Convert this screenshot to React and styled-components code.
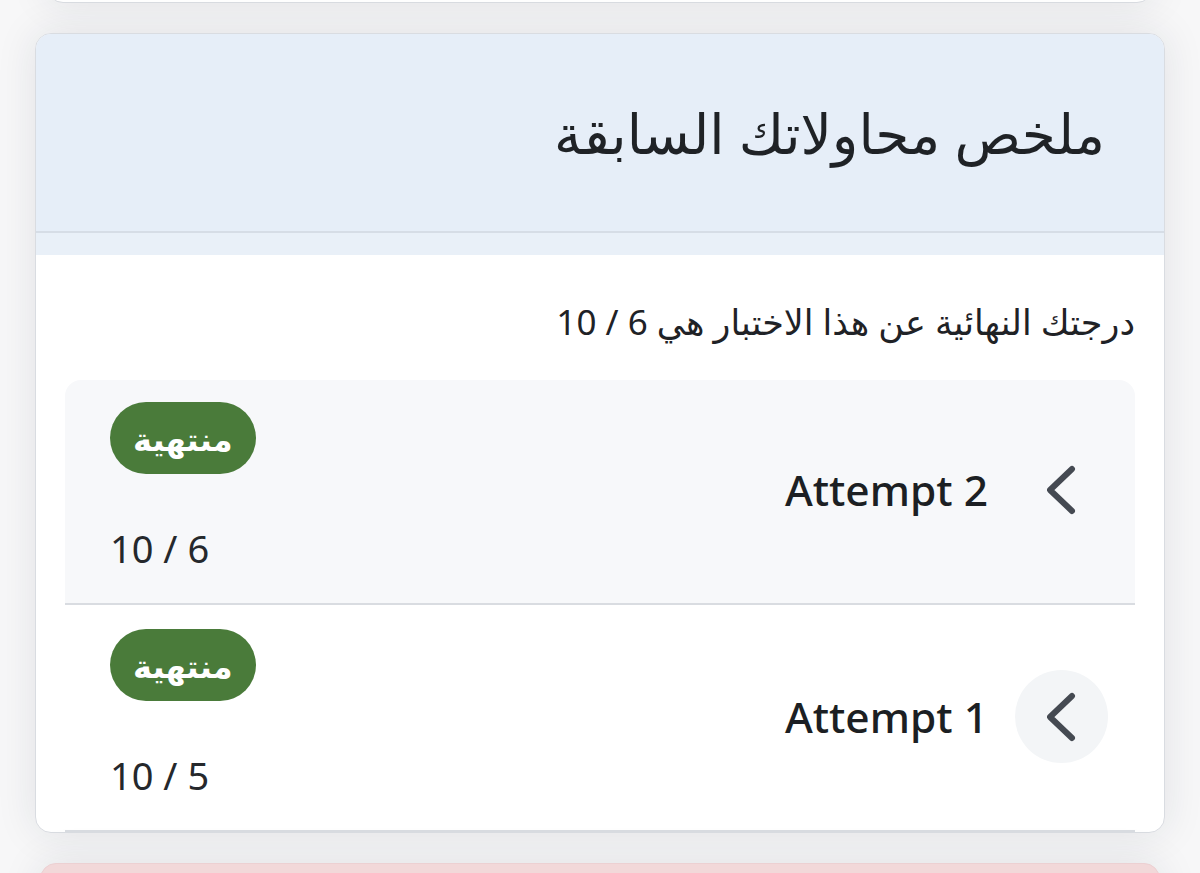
import React from "react";
import styled, { createGlobalStyle } from "styled-components";

const Global = createGlobalStyle`
  html, body { margin: 0; padding: 0; }
  body {
    background: #f7f7f8;
    font-family: "Noto Sans", "DejaVu Sans", sans-serif;
    color: #1f2226;
    overflow: hidden;
  }
`;

const Page = styled.div`
  display: flex;
  flex-direction: column;
  gap: 30px;
  height: 873px;
  overflow: hidden;
  direction: rtl;
`;

const Card = styled.div`
  margin: 0 ${(p) => p.$inset}px;
  background: ${(p) => p.$bg || "#ffffff"};
  border: 1px solid ${(p) => p.$border || "#d9dce1"};
  border-radius: 16px;
  box-shadow: 0 0 40px rgba(30, 40, 60, 0.1);
  overflow: hidden;
  flex-shrink: 0;
`;

const TopCard = styled(Card)`
  height: 60px;
  margin-top: -59px;
`;

const BottomCard = styled(Card)`
  height: 80px;
`;

const Header = styled.div`
  height: 197px;
  background: #e6eef8;
  border-bottom: 2px solid #d6dde6;
  display: flex;
  align-items: center;
  padding: 0 59px;
`;

const Title = styled.h2`
  margin: 0;
  font-size: 55px;
  font-weight: 400;
  color: #1f2226;
`;

const Strip = styled.div`
  height: 22px;
  background: #e9f0f8;
`;

const Body = styled.div`
  padding: 38px 29px 0 29px;
  display: flex;
  flex-direction: column;
`;

const Summary = styled.p`
  margin: 0 0 29px;
  font-size: 35px;
  line-height: 58px;
  color: #1f2226;
`;

const List = styled.div`
  display: flex;
  flex-direction: column;
`;

const Item = styled.div`
  display: flex;
  justify-content: space-between;
  align-items: center;
  padding: ${(p) => (p.$first ? "22px" : "24px")} 27px 26px 45px;
  background: ${(p) => (p.$active ? "#f7f8fa" : "#ffffff")};
  border-bottom: 2px solid #d9dce1;
  border-radius: ${(p) => (p.$first ? "16px 16px 0 0" : "0")};
`;

const Lead = styled.div`
  display: flex;
  align-items: center;
  gap: 27px;
`;

const ChevronButton = styled.div`
  width: 93px;
  height: 93px;
  border-radius: 50%;
  background: ${(p) => (p.$hover ? "#f3f5f7" : "transparent")};
  display: flex;
  align-items: center;
  justify-content: center;
`;

const AttemptName = styled.span`
  font-size: 42.5px;
  font-weight: 500;
  color: #1c1f23;
  direction: ltr;
`;

const Side = styled.div`
  display: flex;
  flex-direction: column;
  align-items: flex-end;
  gap: 46px;
`;

const Badge = styled.span`
  display: inline-flex;
  align-items: center;
  justify-content: center;
  height: 72px;
  padding: 0 23px;
  border-radius: 36px;
  background: #4a7b3a;
  color: #ffffff;
  font-size: 32px;
  font-weight: 700;
`;

const Score = styled.span`
  font-size: 38px;
  line-height: 57px;
  color: #25282c;
`;

const Chevron = () => (
  <svg width="30" height="50" viewBox="0 0 30 50" aria-hidden="true">
    <polyline
      points="25,4 3,25 25,46"
      fill="none"
      stroke="#454a52"
      strokeWidth="6"
      strokeLinecap="round"
      strokeLinejoin="round"
    />
  </svg>
);

const attempts = [
  { name: "Attempt 2", score: "6 / 10", active: true, hover: false },
  { name: "Attempt 1", score: "5 / 10", active: false, hover: true },
];

export default function App() {
  return (
    <>
      <Global />
      <Page>
        <TopCard $inset={47} />
        <Card $inset={35}>
          <Header>
            <Title>ملخص محاولاتك السابقة</Title>
          </Header>
          <Strip />
          <Body>
            <Summary>درجتك النهائية عن هذا الاختبار هي 6 / 10</Summary>
            <List>
              {attempts.map((a, i) => (
                <Item key={a.name} $first={i === 0} $active={a.active}>
                  <Lead>
                    <ChevronButton $hover={a.hover}>
                      <Chevron />
                    </ChevronButton>
                    <AttemptName>{a.name}</AttemptName>
                  </Lead>
                  <Side>
                    <Badge>منتهية</Badge>
                    <Score>{a.score}</Score>
                  </Side>
                </Item>
              ))}
            </List>
          </Body>
        </Card>
        <BottomCard $inset={40} $bg="#f2d8d9" $border="#ecd0d2" />
      </Page>
    </>
  );
}
